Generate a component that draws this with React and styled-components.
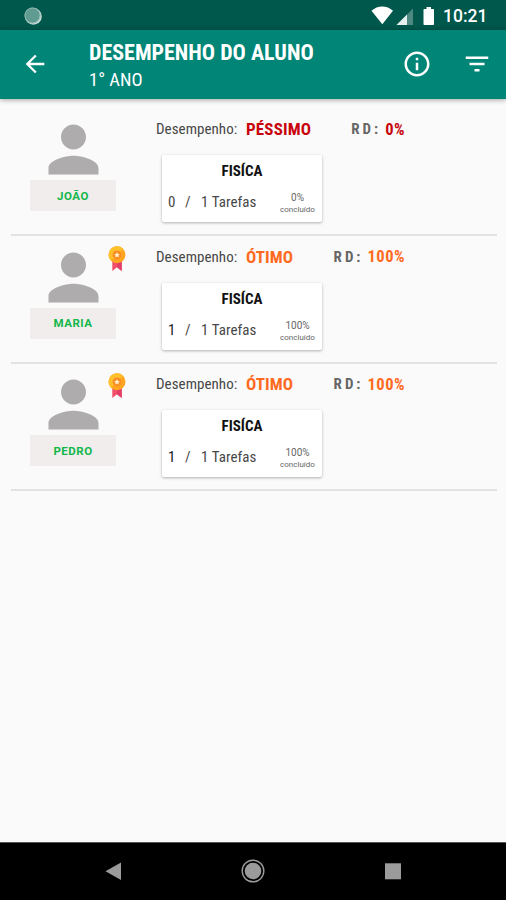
import styled, { createGlobalStyle } from "styled-components";

const colors = {
  statusBar: "#00574b",
  appBar: "#008577",
  page: "#fafafa",
  name: "#12b74a",
  bad: "#c8040d",
  great: "#ff6a1f",
};

const students = [
  { name: "JOÃO", grade: "PÉSSIMO", done: 0, percent: "0%", color: colors.bad },
  { name: "MARIA", grade: "ÓTIMO", done: 1, percent: "100%", color: colors.great, medal: true },
  { name: "PEDRO", grade: "ÓTIMO", done: 1, percent: "100%", color: colors.great, medal: true },
];

export default function App() {
  return (
    <Screen>
      <GlobalStyle />
      <StatusBar>
        <Spinner viewBox="0 0 18 18">
          <circle cx="9.4" cy="9.4" r="8.4" fill="#c3dbd6" />
          <circle cx="8.3" cy="8.3" r="7.6" fill="#5f9b91" />
          <circle cx="8.5" cy="8.5" r="7.6" fill="none" stroke="#94bbb4" strokeWidth="1" />
        </Spinner>
        <StatusIcons />
        <Clock>10:21</Clock>
      </StatusBar>
      <AppBar>
        <BackIcon viewBox="0 0 24 24">
          <path d="M20 11H7.83l5.59-5.59L12 4l-8 8 8 8 1.41-1.41L7.83 13H20v-2z" />
        </BackIcon>
        <Titles>
          <Title>DESEMPENHO DO ALUNO</Title>
          <Subtitle>1° ANO</Subtitle>
        </Titles>
        <BarIcon viewBox="0 0 24 24">
          <path d="M11 7h2v2h-2zm0 4h2v6h-2zm1-9C6.48 2 2 6.48 2 12s4.48 10 10 10 10-4.48 10-10S17.52 2 12 2zm0 18c-4.41 0-8-3.59-8-8s3.59-8 8-8 8 3.59 8 8-3.59 8-8 8z" />
        </BarIcon>
        <BarIcon viewBox="0 0 24 24">
          <path d="M10 18h4v-2h-4v2zM3 6v2h18V6H3zm3 7h12v-2H6v2z" />
        </BarIcon>
      </AppBar>
      <List>
        {students.map((student) => (
          <StudentRow key={student.name} student={student} />
        ))}
      </List>
      <NavBar>
        <NavIcon viewBox="0 0 24 24">
          <path d="M4.5 12.2 20 3.5v17.4z" />
        </NavIcon>
        <NavIcon viewBox="0 0 24 24">
          <circle cx="12" cy="12" r="8.3" />
          <circle cx="12" cy="12" r="10.8" fill="none" stroke="#9b9b9b" strokeWidth="1.4" />
        </NavIcon>
        <NavIcon viewBox="0 0 24 24">
          <rect x="4" y="4.3" width="16" height="16" />
        </NavIcon>
      </NavBar>
    </Screen>
  );
}

function StudentRow({ student }) {
  return (
    <Row>
      <Profile>
        <Avatar viewBox="0 0 24 24">
          <path d="M12 12c2.21 0 4-1.79 4-4s-1.79-4-4-4-4 1.79-4 4 1.79 4 4 4zm0 2c-2.67 0-8 1.34-8 4v2h16v-2c0-2.66-5.33-4-8-4z" />
        </Avatar>
        {student.medal && <MedalIcon />}
        <NameButton>{student.name}</NameButton>
      </Profile>
      <Details>
        <Summary>
          <Label>Desempenho:</Label>
          <Grade $color={student.color}>{student.grade}</Grade>
          <RdLabel>RD:</RdLabel>
          <RdValue $color={student.color}>{student.percent}</RdValue>
        </Summary>
        <Card>
          <Subject>FISÍCA</Subject>
          <Tasks>
            <Count $width={17} $dark={student.done > 0}>{student.done}</Count>
            <Count $width={16}>/</Count>
            <Count>1 Tarefas</Count>
            <Progress>
              <Percent>{student.percent}</Percent>
              <Done>concluído</Done>
            </Progress>
          </Tasks>
        </Card>
      </Details>
    </Row>
  );
}

function StatusIcons() {
  return (
    <StatusSvg viewBox="0 0 64 20">
      {/* wifi */}
      <path d="M.5 4.800C6.500-.9 16-.9 22 4.800L11.300 18.200z" fill="#fff" />
      {/* signal */}
      <path d="M25.500 19 42 2.500V19z" fill="#4d8981" />
      <path d="M25.500 19 36 8.500V19z" fill="#e6f0ee" />
      {/* battery */}
      <path d="M55.500 1h4.500v2h2.200q.8 0 .8.800V18.200q0 .8-.8.800H53.300q-.8 0-.8-.8V3.800q0-.8.800-.8h2.200z" fill="#fff" />
    </StatusSvg>
  );
}

function MedalIcon() {
  return (
    <Medal viewBox="0 0 18 26">
      <path d="M4.300 14.500h9.400V25L9 21.300 4.300 25z" fill="#f2506a" />
      <path d="M9 14.500h4.700V25L9 21.300z" fill="#e23f68" />
      <circle cx="9" cy="8.800" r="8.500" fill="#ffa51f" />
      <path d="M2.990 14.810A8.500 8.500 0 0 1 15.010 2.790z" fill="#ffc02b" />
      <circle cx="9" cy="8.800" r="4.400" fill="#f98b22" />
      <path d="m9 6 .9 1.900 2 .3-1.500 1.400.4 2L9 10.600l-1.800 1 .4-2-1.500-1.400 2-.3z" fill="#fff2d0" />
    </Medal>
  );
}

const GlobalStyle = createGlobalStyle`
  * {
    box-sizing: border-box;
  }

  body {
    margin: 0;
    background: ${colors.page};
    font-family: "Roboto Condensed", Roboto, sans-serif;
    font-stretch: 75%;
  }
`;

const Screen = styled.div`
  width: 506px;
  height: 900px;
  display: flex;
  flex-direction: column;
  overflow: hidden;
  background: ${colors.page};
`;

const StatusBar = styled.header`
  height: 30px;
  flex: none;
  display: flex;
  align-items: center;
  padding: 1px 19px 0 24px;
  background: ${colors.statusBar};
`;

const Spinner = styled.svg`
  width: 18px;
  height: 18px;
  margin-right: auto;
`;

const StatusSvg = styled.svg`
  width: 64px;
  height: 20px;
  margin-right: 8px;
`;

const Clock = styled.span`
  width: 44px;
  color: #fff;
  font-family: Roboto, sans-serif;
  font-size: 17.5px;
  font-weight: 500;
  font-stretch: 100%;
  white-space: nowrap;
`;

const AppBar = styled.div`
  height: 69px;
  flex: none;
  display: flex;
  align-items: center;
  padding: 0 14px 1px 21px;
  background: ${colors.appBar};
  box-shadow: 0 1px 5px rgba(0, 0, 0, 0.35);
`;

const BackIcon = styled.svg`
  width: 28px;
  height: 28px;
  margin-right: 40px;
  fill: #fff;
`;

const Titles = styled.div`
  flex: 1;
  padding-top: 4px;
  display: flex;
  flex-direction: column;
  color: #fff;
  white-space: nowrap;
`;

const Title = styled.h1`
  margin: 0;
  font-size: 22px;
  line-height: 28px;
  font-weight: 700;
`;

const Subtitle = styled.span`
  font-size: 18.5px;
  line-height: 26px;
`;

const BarIcon = styled.svg`
  width: 30px;
  height: 30px;
  margin-left: 30px;
  fill: #fff;
`;

const List = styled.main`
  flex: 1;
  padding: 9.5px 9px 0 11px;
`;

const Row = styled.section`
  height: 127.5px;
  display: flex;
  padding: 3.5px 0 0 19px;
  border-bottom: 2px solid #e2e2e2;
`;

const Profile = styled.div`
  position: relative;
  width: 86px;
  display: flex;
  flex-direction: column;
  align-items: center;
`;

const Avatar = styled.svg`
  width: 75px;
  height: 75px;
  flex: none;
  fill: #aeacad;
`;

const Medal = styled.svg`
  position: absolute;
  top: 6px;
  right: -9.5px;
  width: 18px;
  height: 26px;
`;

const NameButton = styled.button`
  width: 86px;
  height: 31px;
  margin-top: -7px;
  padding: 0;
  border: 0;
  background: #f0edec;
  color: ${colors.name};
  font-family: Roboto, sans-serif;
  font-size: 11.5px;
  font-weight: 700;
  letter-spacing: 0.5px;
`;

const Details = styled.div`
  padding: 6px 0 0 40px;
`;

const Summary = styled.div`
  width: 249px;
  height: 22px;
  display: flex;
  align-items: center;
  white-space: nowrap;
`;

const Label = styled.span`
  width: 90px;
  color: #484848;
  font-size: 15px;
  letter-spacing: 0.05px;
`;

const Grade = styled.span`
  color: ${(props) => props.$color};
  font-size: 17px;
  font-weight: 700;
  letter-spacing: 0.15px;
`;

const RdLabel = styled.span`
  margin-left: auto;
  color: #666;
  font-size: 15px;
  font-weight: 700;
  letter-spacing: 3px;
`;

const RdValue = styled.span`
  margin-left: 4px;
  color: ${(props) => props.$color};
  font-size: 16.5px;
  font-weight: 700;
  letter-spacing: 0.5px;
`;

const Card = styled.div`
  width: 160px;
  height: 67px;
  margin: 15px 0 0 6px;
  padding: 7px 6px 0;
  border-radius: 2px;
  background: #fff;
  box-shadow: 0 1px 3px rgba(0, 0, 0, 0.3);
`;

const Subject = styled.div`
  color: #111;
  font-size: 15px;
  line-height: 18px;
  font-weight: 700;
  text-align: center;
`;

const Tasks = styled.div`
  height: 28px;
  margin-top: 8px;
  display: flex;
  align-items: center;
  white-space: nowrap;
`;

const Count = styled.span`
  width: ${(props) => (props.$width ? `${props.$width}px` : "auto")};
  color: ${(props) => (props.$dark ? "#222" : "#484848")};
  font-size: 15px;
  letter-spacing: 0.05px;
`;

const Progress = styled.div`
  width: 37px;
  margin-left: auto;
  padding-top: 3px;
  display: flex;
  flex-direction: column;
  align-items: center;
  color: #666;
  font-family: Roboto, sans-serif;
  font-stretch: 100%;
`;

const Percent = styled.span`
  font-size: 10px;
  line-height: 13px;
`;

const Done = styled.span`
  font-size: 8px;
  line-height: 12px;
`;

const NavBar = styled.nav`
  height: 58px;
  flex: none;
  display: flex;
  align-items: center;
  justify-content: center;
  gap: 116px;
  padding-bottom: 2px;
  border-top: 1px solid #555;
  background: #000;
`;

const NavIcon = styled.svg`
  width: 24px;
  height: 24px;
  fill: #9b9b9b;
`;
